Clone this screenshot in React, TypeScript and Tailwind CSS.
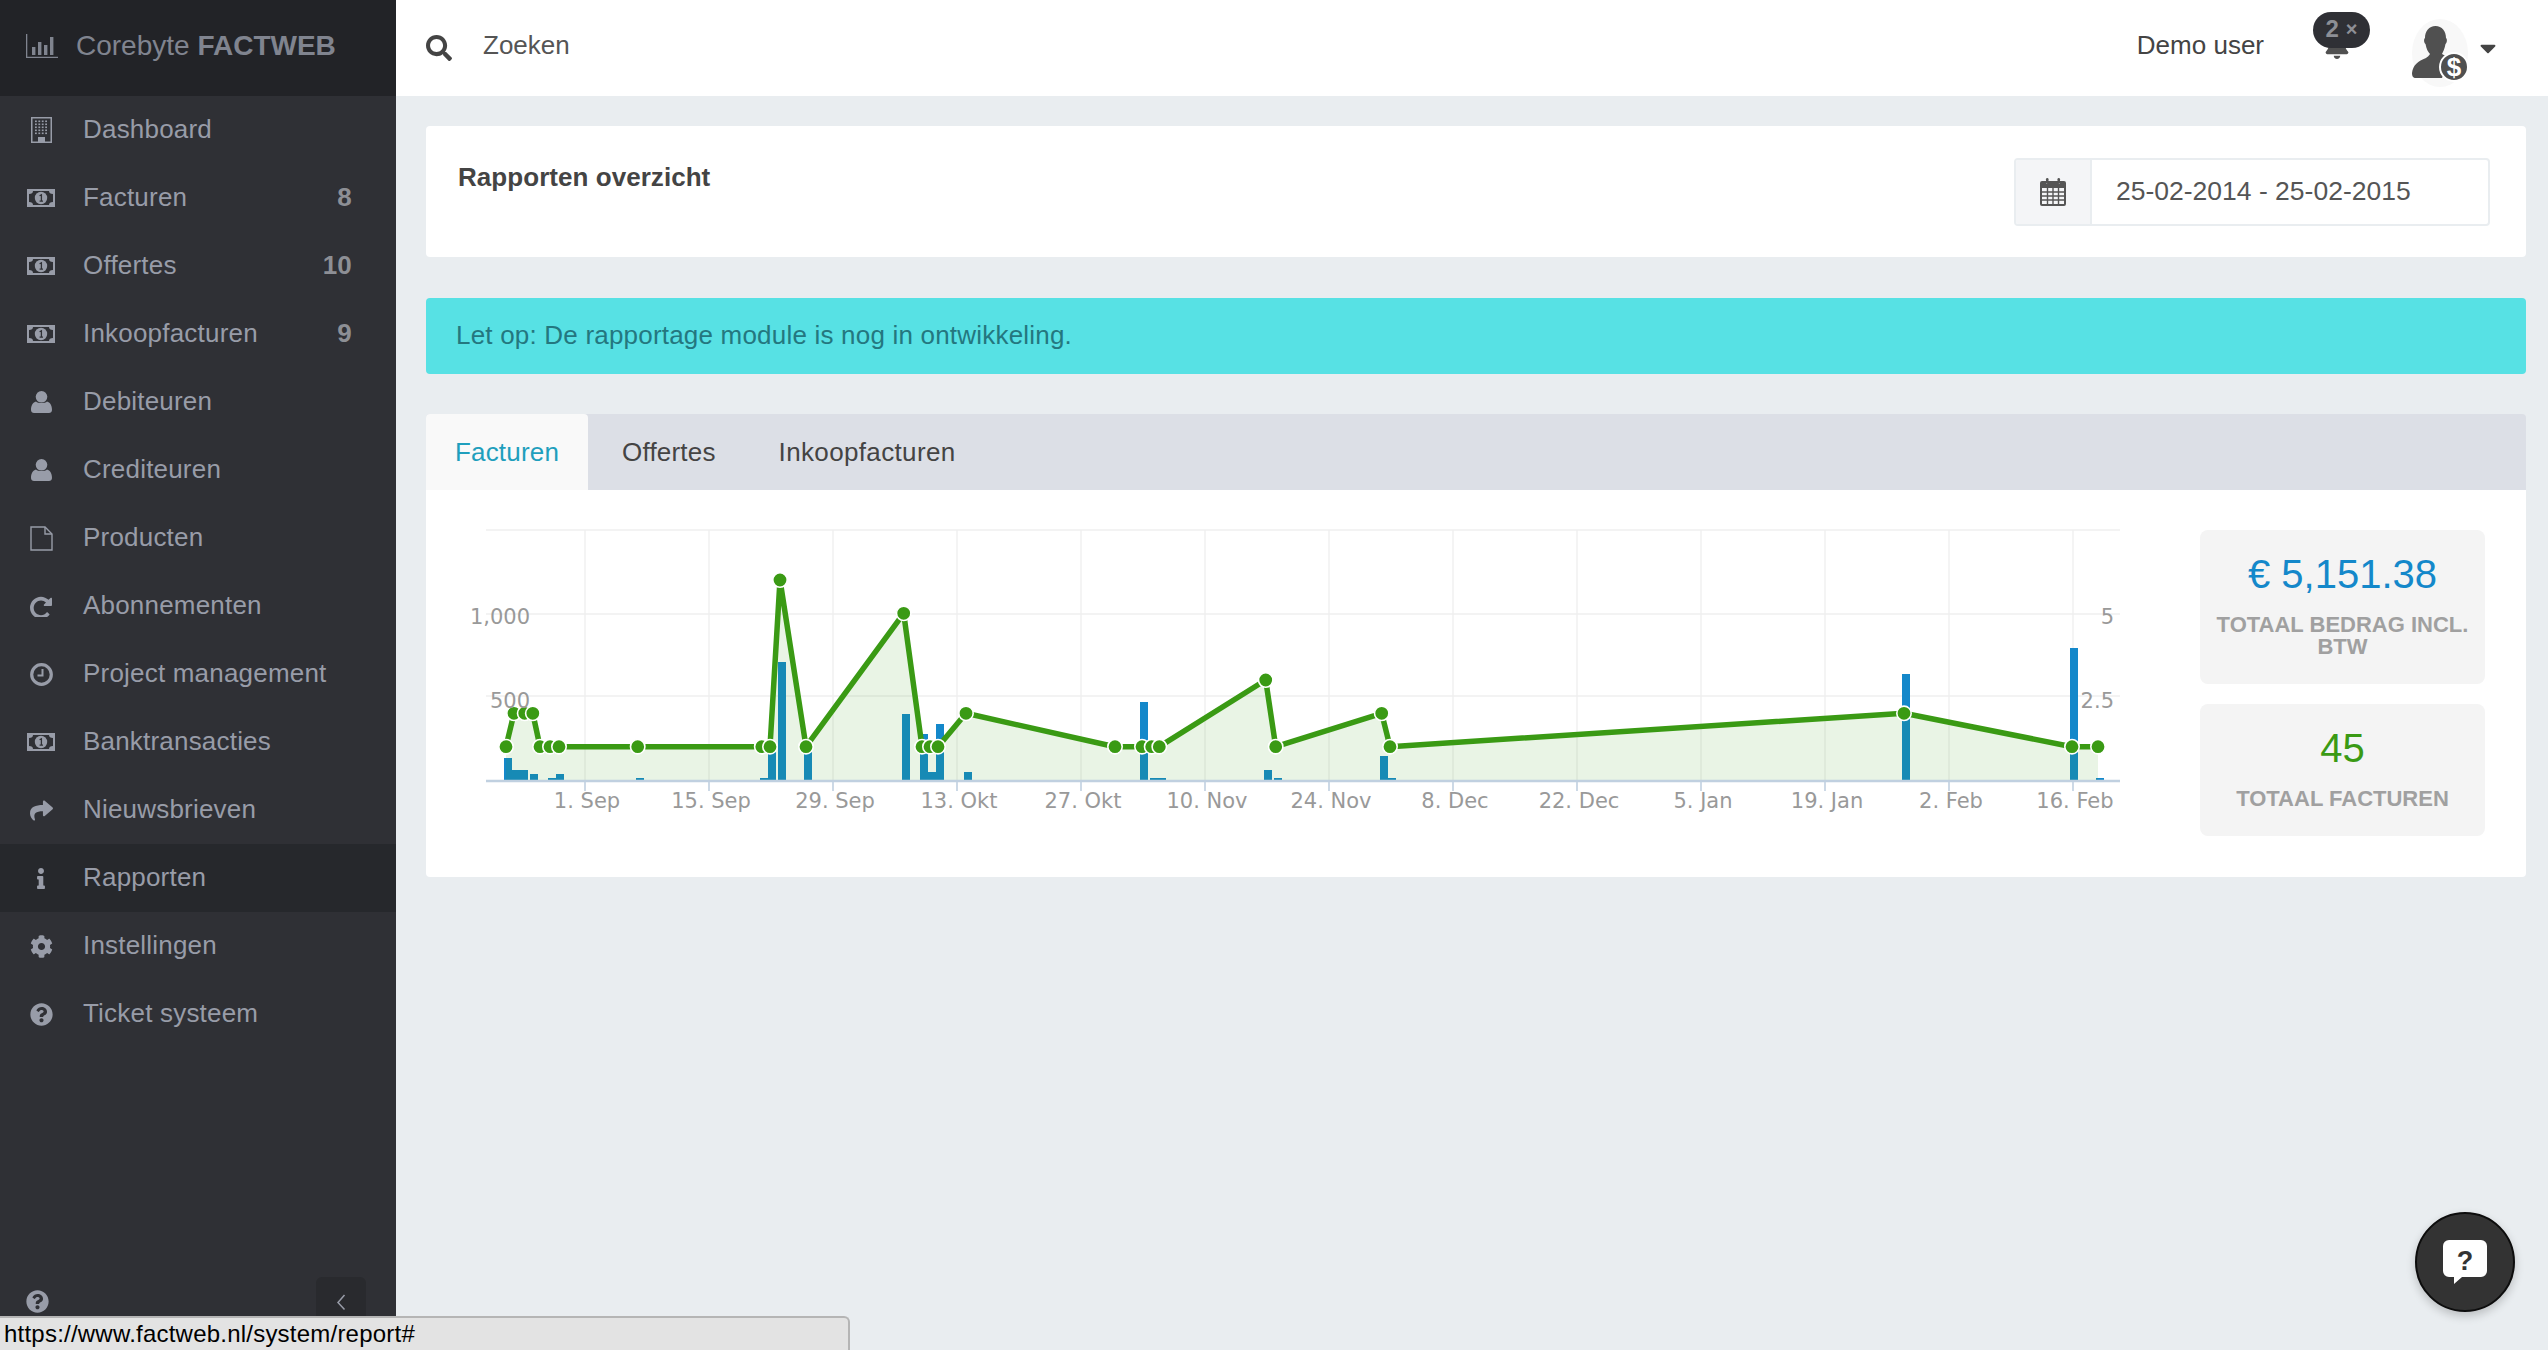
import {
  FaShare,
  FaInfo,
  FaCog,
  FaQuestionCircle,
  FaSearch,
  FaBell,
  FaCaretDown,
} from 'react-icons/fa'
import type { ReactNode } from 'react'

function MoneyIcon() {
  return (
    <svg width="28" height="18" viewBox="0 0 28 18" fill="currentColor">
      <path
        fillRule="evenodd"
        d="M0 0h28v18H0z M6 2L22 2Q22 5 26 5L26 13Q22 13 22 16L6 16Q6 13 2 13L2 5Q6 5 6 2z"
      />
      <circle cx="14" cy="9" r="6.2" />
      <path d="M12.6 6.8L14.4 5.8V12.2M12.6 12.2H16" fill="none" stroke="#2f3035" strokeWidth="1.3" />
    </svg>
  )
}

function UserIcon() {
  return (
    <svg width="21" height="22" viewBox="0 0 21 22" fill="currentColor">
      <circle cx="10.5" cy="5.8" r="5.8" />
      <path d="M5 10.5C7 12.6 14 12.6 16 10.5C19 11.5 21 14 21 19C21 21 19.6 22 18 22H3C1.4 22 0 21 0 19C0 14 2 11.5 5 10.5z" />
    </svg>
  )
}

function BuildingIcon() {
  const dots = []
  for (let r = 0; r < 5; r++) {
    for (let c = 0; c < 4; c++) {
      dots.push(<rect key={`${r}-${c}`} x={4 + c * 3.4} y={3.5 + r * 3} width="1.8" height="1.6" fill="currentColor" />)
    }
  }
  return (
    <svg width="21" height="26" viewBox="0 0 21 26" fill="none">
      <rect x="0.75" y="0.75" width="19.5" height="24.5" stroke="currentColor" strokeWidth="1.5" />
      {dots}
      <rect x="7" y="20" width="7" height="5.500" fill="currentColor" />
    </svg>
  )
}

function FileIcon() {
  return (
    <svg width="23" height="25" viewBox="0 0 23 25" fill="none" stroke="currentColor" strokeWidth="1.4">
      <path d="M1 1H15L22 8V24H1z" />
      <path d="M15 1V8H22" />
    </svg>
  )
}

function RepeatIcon() {
  return (
    <svg width="22" height="22" viewBox="0 0 1536 1536" fill="currentColor">
      <path d="M1536 256v448q0 26-19 45t-45 19h-448q-42 0-59-40-17-39 14-69l138-138q-148-137-349-137-104 0-198.500 40.500t-163.500 109.500-109.500 163.500-40.500 198.500 40.500 198.500 109.500 163.500 163.500 109.500 198.500 40.500q119 0 225-52t179-147q7-10 23-12 15 0 25 9l137 138q9 8 9.500 20.500t-7.500 22.500q-109 132-264 204.500t-327 72.500q-156 0-298-61t-245-164-164-245-61-298 61-298 164-245 245-164 298-61q147 0 284.500 55.500t244.500 156.500l130-129q29-31 70-14 39 17 39 59z" />
    </svg>
  )
}

function ClockIcon() {
  return (
    <svg width="23" height="23" viewBox="0 0 23 23" fill="none" stroke="currentColor">
      <circle cx="11.5" cy="11.5" r="9.800" strokeWidth="3.200" />
      <path d="M12.5 6V12.5H7.500" strokeWidth="2" />
    </svg>
  )
}

function LogoIcon() {
  return (
    <svg width="32" height="24" viewBox="0 0 32 24" fill="currentColor" className="text-[#80848f]">
      <path d="M0 0h1.300v22.700H32V24H0z" />
      <rect x="6" y="13" width="3.400" height="8" />
      <rect x="12" y="8" width="3.400" height="13" />
      <rect x="18" y="11" width="3.400" height="10" />
      <rect x="24" y="3" width="3.400" height="18" />
    </svg>
  )
}

function CalendarIcon() {
  return (
    <svg width="26" height="28" viewBox="0 0 26 28" className="text-[#555]">
      <path
        fill="currentColor"
        fillRule="evenodd"
        d="M2 3h4v3h2V3h10v3h2V3h4a2 2 0 0 1 2 2v21a2 2 0 0 1-2 2H2a2 2 0 0 1-2-2V5a2 2 0 0 1 2-2z M2 10v16h22V10z"
      />
      <path
        d="M7.5 10v16M13 10v16M18.500 10v16M2 14h22M2 18h22M2 22h22"
        stroke="currentColor"
        strokeWidth="1.4"
        fill="none"
      />
      <rect x="6" y="0" width="2.500" height="6" rx="1.200" fill="currentColor" />
      <rect x="17.500" y="0" width="2.500" height="6" rx="1.200" fill="currentColor" />
    </svg>
  )
}

function Avatar() {
  return (
    <svg width="56" height="69" viewBox="0 0 56 69">
      <ellipse cx="28" cy="34" rx="28" ry="34" fill="#f8f8f8" />
      <path
        fill="#505050"
        d="M23.500 7C30 7 34 12 34 19C35.500 20 35 24 33.500 25C32.500 30 31 33 30 35C33 37 36 38 38 39L30 59H4C1 59 0 57 0 54C1 46 6 42 14 39C15 38 17 37 18 35C16 33 14.500 30 13.500 25C12 24 11.500 20 13 19C13 12 17 7 23.500 7z"
      />
      <circle cx="42" cy="48" r="14" fill="#505050" stroke="#fff" strokeWidth="2" />
      <text x="42" y="57" textAnchor="middle" fontSize="26" fontWeight="700" fontFamily="Liberation Sans" fill="#fff">
        $
      </text>
    </svg>
  )
}

const menu: { label: string; icon: ReactNode; count?: number; active?: boolean }[] = [
  { label: 'Dashboard', icon: <BuildingIcon /> },
  { label: 'Facturen', icon: <MoneyIcon />, count: 8 },
  { label: 'Offertes', icon: <MoneyIcon />, count: 10 },
  { label: 'Inkoopfacturen', icon: <MoneyIcon />, count: 9 },
  { label: 'Debiteuren', icon: <UserIcon /> },
  { label: 'Crediteuren', icon: <UserIcon /> },
  { label: 'Producten', icon: <FileIcon /> },
  { label: 'Abonnementen', icon: <RepeatIcon /> },
  { label: 'Project management', icon: <ClockIcon /> },
  { label: 'Banktransacties', icon: <MoneyIcon /> },
  { label: 'Nieuwsbrieven', icon: <FaShare className="h-[23px] w-[27px]" /> },
  { label: 'Rapporten', icon: <FaInfo className="h-[21px] w-[12px]" />, active: true },
  { label: 'Instellingen', icon: <FaCog className="h-[23px] w-[23px]" /> },
  { label: 'Ticket systeem', icon: <FaQuestionCircle className="h-[23px] w-[23px]" /> },
]

function Sidebar() {
  return (
    <aside className="flex w-[396px] shrink-0 flex-col bg-[#2f3035] text-[26px] tracking-[0.2px] text-[#989ca8]">
      <div className="flex h-[96px] items-center gap-[18px] bg-[#222327] pb-[4px] pl-[26px] text-[28px] tracking-normal text-[#80848f]">
        <LogoIcon />
        <span>
          Corebyte <b>FACTWEB</b>
        </span>
      </div>
      {menu.map((item) => (
        <div
          key={item.label}
          className={`flex h-[68px] items-center pr-[44px] ${item.active ? 'bg-[#26282c]' : ''}`}
        >
          <span className="flex w-[83px] justify-center pr-[1px]">{item.icon}</span>
          <span className="mb-[2px] flex-1">{item.label}</span>
          {item.count !== undefined && <b className="mb-[2px] text-[#8d8f95]">{item.count}</b>}
        </div>
      ))}
      <div className="mt-auto flex h-[73px] items-start justify-between pr-[30px]">
        <FaQuestionCircle className="mt-[13px] ml-[26px] h-[23px] w-[23px]" />
        <div className="flex h-[73px] w-[50px] items-start justify-center rounded-t-[6px] bg-[#292a2e] pt-[15px]">
          <svg width="12" height="20" viewBox="0 0 12 20" fill="none" stroke="#989ca8" strokeWidth="1.500">
            <path d="M9.500 3L3 10.500l6.500 7" />
          </svg>
        </div>
      </div>
    </aside>
  )
}

function Header() {
  return (
    <header className="flex h-[96px] items-center bg-white pr-[52px] pl-[30px] text-[26px] text-[#555]">
      <FaSearch className="h-[26px] w-[26px] text-[#444]" />
      <span className="mb-[5px] ml-[31px] flex-1 text-[#555]">Zoeken</span>
      <span className="mr-[49px] mb-[5px] text-[#444]">Demo user</span>
      <div className="relative mr-[42px] h-[96px] w-[57px]">
        <FaBell className="absolute top-[33px] left-[11px] h-[26px] w-[26px] text-[#505050]" />
        <div className="absolute top-[12px] left-0 flex h-[36px] w-[57px] items-center justify-center gap-[7px] rounded-[18px] bg-[#2f3035] pb-[3px] font-bold text-[#8d8f95]">
          <span className="text-[24px]">2</span>
          <span className="text-[20px]">×</span>
        </div>
      </div>
      <div className="mt-[10px] mr-[12px]">
        <Avatar />
      </div>
      <FaCaretDown className="h-[26px] w-[16px] text-[#444]" />
    </header>
  )
}

const grid = [585, 709, 833, 957, 1081, 1205, 1329, 1453, 1577, 1701, 1825, 1949, 2073]
const ticks = [
  '1. Sep',
  '15. Sep',
  '29. Sep',
  '13. Okt',
  '27. Okt',
  '10. Nov',
  '24. Nov',
  '8. Dec',
  '22. Dec',
  '5. Jan',
  '19. Jan',
  '2. Feb',
  '16. Feb',
]

// x, breedte, bovenkant
const bars = [
  [504, 8, 758],
  [512, 16, 770],
  [530, 8, 774],
  [548, 8, 778],
  [556, 8, 774],
  [636, 8, 778],
  [760, 8, 778],
  [768, 8, 743],
  [778, 8, 662],
  [804, 8, 745],
  [902, 8, 714],
  [920, 8, 734],
  [928, 8, 772],
  [936, 8, 724],
  [964, 8, 772],
  [1140, 8, 702],
  [1150, 16, 778],
  [1264, 8, 770],
  [1274, 8, 778],
  [1380, 8, 756],
  [1388, 8, 778],
  [1902, 8, 674],
  [2070, 8, 648],
  [2096, 8, 778],
]

const points = [
  [506, 746.7],
  [514, 713.3],
  [524.7, 713.3],
  [532.8, 713.3],
  [540, 746.7],
  [550, 746.7],
  [559, 746.7],
  [637.7, 746.7],
  [761.8, 746.7],
  [770, 746.7],
  [780, 580],
  [806, 746.7],
  [903.7, 613.3],
  [922, 746.7],
  [930, 746.7],
  [938, 746.7],
  [966, 713.3],
  [1115, 746.7],
  [1142, 746.7],
  [1151.7, 746.7],
  [1159.3, 746.7],
  [1265.7, 680],
  [1275.7, 746.7],
  [1381.7, 713.3],
  [1390, 746.7],
  [1904, 713.3],
  [2072, 746.7],
  [2098, 746.7],
]

function Chart() {
  const line = points.map((p) => p.join(',')).join(' ')
  const area = `506,780 ${line} 2098,780`

  return (
    <svg width="1760" height="387" viewBox="426 490 1760 387" className="shrink-0">
      {[530, 614, 696].map((y) => (
        <line key={y} x1="486" x2="2120" y1={y} y2={y} stroke="#efefef" strokeWidth="1.300" />
      ))}
      {grid.map((x) => (
        <line key={x} x1={x} x2={x} y1="530" y2="780" stroke="#efefef" strokeWidth="1.300" />
      ))}
      {bars.map(([x, w, top]) => (
        <rect key={`${x}-${top}`} x={x} y={top} width={w} height={780 - top} fill="#1488ca" />
      ))}
      <polygon points={area} fill="#3a9a14" fillOpacity="0.11" />
      <polyline points={line} fill="none" stroke="#3a9a14" strokeWidth="5.500" strokeLinejoin="round" />
      {points.map(([x, y]) => (
        <circle key={x} cx={x} cy={y} r="7.200" fill="#3a9a14" stroke="#fff" strokeWidth="1.600" />
      ))}
      <line x1="486" x2="2120" y1="781" y2="781" stroke="#c0d0e0" strokeWidth="2.400" />
      {grid.map((x) => (
        <line key={x} x1={x} x2={x} y1="781" y2="791" stroke="#c0d0e0" strokeWidth="1.600" />
      ))}
      <g fontFamily="DejaVu Sans" fontSize="21" fill="#999999">
        {ticks.map((t, i) => (
          <text key={t} x={grid[i] + 2} y="808" textAnchor="middle">
            {t}
          </text>
        ))}
        <text x="530" y="624" textAnchor="end">
          1,000
        </text>
        <text x="530" y="708" textAnchor="end">
          500
        </text>
        <text x="2114" y="624" textAnchor="end">
          5
        </text>
        <text x="2114" y="708" textAnchor="end">
          2.5
        </text>
      </g>
    </svg>
  )
}

function StatBox({ value, label, color, className }: { value: string; label: string; color: string; className: string }) {
  return (
    <div className={`w-[285px] rounded-[8px] bg-[#f4f4f4] px-[14px] text-center ${className}`}>
      <div className={`text-[40px] leading-[46px] ${color}`}>{value}</div>
      <div className="mt-[17px] text-[22px] leading-[22px] font-bold text-[#a0a0a0] uppercase">{label}</div>
    </div>
  )
}

export default function App() {
  return (
    <div className="relative flex h-[1350px] w-[2548px] overflow-hidden bg-[#e9edf0] [font-family:'Liberation_Sans',Arial,sans-serif]">
      <Sidebar />
      <div className="flex min-w-0 flex-1 flex-col">
        <Header />
        <main className="flex flex-col pt-[30px] pr-[22px] pl-[30px] text-[26px] tracking-[0.2px]">
          <div className="flex h-[131px] items-start justify-between rounded-[4px] bg-white pt-[32px] pr-[36px] pl-[32px]">
            <h1 className="mt-[4px] text-[26px] leading-[30px] font-bold tracking-[0.05px] text-[#444]">Rapporten overzicht</h1>
            <div className="flex h-[68px] w-[476px] overflow-hidden rounded-[4px] border-2 border-[#e9edf0]">
              <div className="flex w-[76px] items-center justify-center border-r-2 border-[#e9edf0] bg-[#f4f5f7]">
                <CalendarIcon />
              </div>
              <div className="flex flex-1 items-center pl-[24px] text-[26.500px] tracking-normal text-[#555]">
                25-02-2014 - 25-02-2015
              </div>
            </div>
          </div>

          <div className="mt-[41px] flex h-[76px] items-center rounded-[4px] bg-[#57e1e4] pb-[2px] pl-[30px] text-[#24777f]">
            Let op: De rapportage module is nog in ontwikkeling.
          </div>

          <div className="mt-[40px] flex h-[76px] items-center rounded-t-[4px] bg-[#dcdfe6] text-[#444]">
            <div className="flex h-full w-[162px] items-center justify-center rounded-t-[4px] bg-[#f9f9f9] text-[#1f9fbd]">
              Facturen
            </div>
            <span className="ml-[34px]">Offertes</span>
            <span className="ml-[63px] tracking-[0.35px]">Inkoopfacturen</span>
          </div>

          <div className="flex h-[387px] justify-between rounded-b-[4px] bg-white pr-[41px] tracking-normal">
            <Chart />
            <div className="flex flex-col gap-[20px] pt-[40px]">
              <StatBox value="€ 5,151.38" label="Totaal bedrag incl. BTW" color="text-[#1488ca]" className="h-[154px] pt-[21px]" />
              <StatBox value="45" label="Totaal facturen" color="text-[#3a9a14]" className="h-[132px] pt-[21px]" />
            </div>
          </div>
        </main>
      </div>

      <div className="absolute right-[33px] bottom-[38px] flex h-[100px] w-[100px] items-center justify-center rounded-full border-2 border-[#0d0d0d] bg-[#333333] shadow-[0_4px_10px_rgba(0,0,0,0.2)]">
        <svg width="44" height="44" viewBox="0 0 44 44">
          <path d="M6 0H38A6 6 0 0 1 44 6V31A6 6 0 0 1 38 37H19L11 44V37H6A6 6 0 0 1 0 31V6A6 6 0 0 1 6 0z" fill="#fff" />
          <text x="22" y="30" textAnchor="middle" fontSize="27" fontWeight="700" fontFamily="Liberation Sans" fill="#333">
            ?
          </text>
        </svg>
      </div>

      <div className="absolute bottom-0 left-0 flex h-[34px] w-[850px] items-center rounded-tr-[6px] border-t-2 border-r-2 border-[#b5b5b5] bg-[#e3e3e3] pl-[4px] text-[24px] tracking-[0.22px] text-black">
        https://www.factweb.nl/system/report#
      </div>
    </div>
  )
}
